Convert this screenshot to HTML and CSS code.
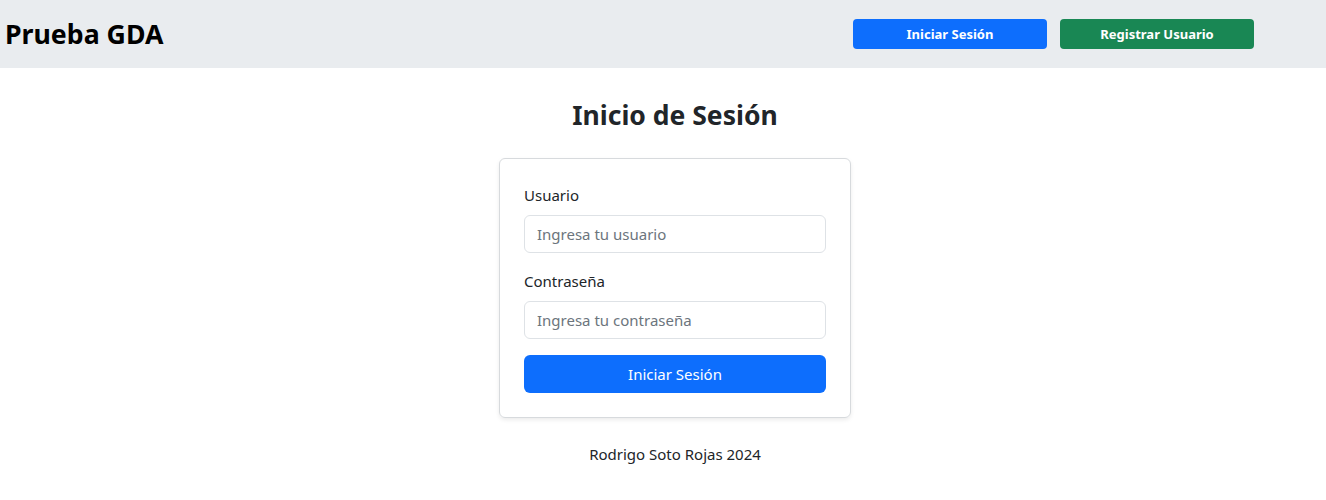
FILE: index.html
```html
<!DOCTYPE html>
<html lang="es">
<head>
<meta charset="utf-8">
<title>Prueba GDA</title>
<link rel="stylesheet" href="styles.css">
</head>
<body>
<header class="topbar">
  <div class="brand">Prueba GDA</div>
  <nav class="actions">
    <button class="btn-nav btn-blue">Iniciar Sesión</button>
    <button class="btn-nav btn-green">Registrar Usuario</button>
  </nav>
</header>
<main class="main">
  <h2 class="title">Inicio de Sesión</h2>
  <form class="card">
    <label class="label" for="u">Usuario</label>
    <input class="input" id="u" type="text" placeholder="Ingresa tu usuario">
    <label class="label" for="p">Contraseña</label>
    <input class="input" id="p" type="password" placeholder="Ingresa tu contraseña">
    <button class="submit" type="button">Iniciar Sesión</button>
  </form>
  <p class="footer">Rodrigo Soto Rojas 2024</p>
</main>
</body>
</html>
```
FILE: styles.css
```css
* { box-sizing: border-box; }
html, body { margin: 0; padding: 0; }
body {
  font-family: "Noto Sans", "Open Sans", sans-serif;
  font-size: 15px;
  line-height: 1.5;
  color: #212529;
  background: #fff;
}
.topbar {
  height: 68px;
  background: #e9ecef;
  display: flex;
  align-items: center;
  justify-content: space-between;
  padding: 0 72px 0 5px;
}
.brand {
  font-size: 26.7px;
  font-weight: 700;
  color: #000;
  line-height: 1.2;
}
.actions {
  display: flex;
  gap: 13px;
}
.btn-nav {
  width: 194px;
  height: 30px;
  border: none;
  border-radius: 4px;
  color: #fff;
  font-family: inherit;
  font-size: 13px;
  font-weight: 700;
  cursor: pointer;
}
.btn-blue { background: #0d6efd; }
.btn-green { background: #198754; }
.main {
  display: flex;
  flex-direction: column;
  align-items: center;
  padding-left: 24px;
}
.title {
  margin: 28px 0 24px;
  font-size: 26.5px;
  font-weight: 700;
  line-height: 1.45;
}
.card {
  width: 352px;
  border: 1px solid #d7dadd;
  border-radius: 6px;
  box-shadow: 0 2px 4px rgba(0,0,0,0.08);
  padding: 24px;
  display: flex;
  flex-direction: column;
}
.label {
  display: block;
  margin-bottom: 8px;
  font-size: 15px;
  line-height: 24px;
}
.input {
  height: 38px;
  border: 1px solid #dee2e6;
  border-radius: 6px;
  padding: 6px 12px;
  font-family: inherit;
  font-size: 15px;
  color: #212529;
  margin-bottom: 16px;
}
.input::placeholder { color: #6c757d; }
.submit {
  height: 38px;
  border: none;
  border-radius: 6px;
  background: #0d6efd;
  color: #fff;
  font-family: inherit;
  font-size: 15px;
}
.footer {
  margin: 24px 0 0;
  font-size: 15px;
  line-height: 24px;
}
```
